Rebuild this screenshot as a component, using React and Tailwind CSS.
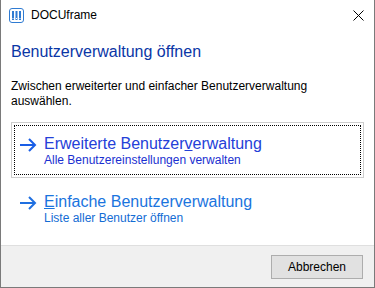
import React from "react";

function AppIcon() {
  return (
    <svg width="15" height="15" viewBox="0 0 15 15">
      <rect x="0.5" y="0.5" width="14" height="14" rx="2.5" fill="none" stroke="#2f7bd2" strokeWidth="1" />
      <rect x="3" y="3" width="2" height="9" fill="#2f7bd2" />
      <rect x="6.5" y="3" width="2" height="9" fill="#2f7bd2" />
      <rect x="10" y="3" width="2" height="9" fill="#2f7bd2" />
      <rect x="3.5" y="10" width="1" height="1" fill="#fff" />
      <rect x="7" y="10" width="1" height="1" fill="#fff" />
      <rect x="10.5" y="10" width="1" height="1" fill="#fff" />
    </svg>
  );
}

function Arrow({ color }) {
  return (
    <svg width="18" height="14" viewBox="0 0 18 14">
      <path d="M1 7 H16 M10 1 L16 7 L10 13" fill="none" stroke={color} strokeWidth="2" />
    </svg>
  );
}

function CommandLink({ title, sub, focused, titleColor, subColor, arrowColor }) {
  return (
    <div
      className={
        "h-[56px] p-[2px] border " +
        (focused ? "border-[#cdcdcd]" : "border-transparent")
      }
    >
      <div
        className={
          "h-full flex border " +
          (focused ? "border-dotted border-black" : "border-transparent")
        }
      >
        <div className="pl-[4px] pt-[12px] w-[29px]">
          <Arrow color={arrowColor} />
        </div>
        <div className="flex flex-col pt-[8px]">
          <span className="text-[16px] leading-[19px]" style={{ color: titleColor }}>
            {title}
          </span>
          <span className="text-[12px] leading-[15px]" style={{ color: subColor }}>
            {sub}
          </span>
        </div>
      </div>
    </div>
  );
}

export default function App() {
  return (
    <div
      className="w-[375px] h-[288px] bg-white border-l border-r border-b border-[#7a7a7a] flex flex-col overflow-hidden"
      style={{ fontFamily: '"Segoe UI", "Liberation Sans", Arial, sans-serif' }}
    >
      <div className="h-[30px] flex items-center pl-[8px] pr-[10px] shrink-0">
        <AppIcon />
        <span className="ml-[7px] text-[12px] text-black">DOCUframe</span>
        <div className="ml-auto">
          <svg width="11" height="11" viewBox="0 0 11 11">
            <path d="M0.5 0.5 L10.5 10.5 M10.5 0.5 L0.5 10.5" stroke="#000" strokeWidth="1" />
          </svg>
        </div>
      </div>
      <div className="flex-1 px-[10px] pt-[12px]">
        <div className="text-[16px] leading-[20px] text-[#0a36a6]">Benutzerverwaltung öffnen</div>
        <div className="mt-[17px] text-[12px] leading-[15px] text-black">
          Zwischen erweiterter und einfacher Benutzerverwaltung
          <br />
          auswählen.
        </div>
        <div className="mt-[13px] w-[353px] flex flex-col gap-[2px]">
          <CommandLink
            focused
            title={<>Erweiterte Benutzer<u>v</u>erwaltung</>}
            sub="Alle Benutzereinstellungen verwalten"
            titleColor="#2440d8"
            subColor="#1a2fd0"
            arrowColor="#1a5ee6"
          />
          <CommandLink
            title={<><u>E</u>infache Benutzerverwaltung</>}
            sub="Liste aller Benutzer öffnen"
            titleColor="#1a74de"
            subColor="#136cd4"
            arrowColor="#1f6fe0"
          />
        </div>
      </div>
      <div className="h-[42px] shrink-0 bg-[#f0f0f0] border-t border-[#dfdfdf] flex items-center justify-end pr-[11px]">
        <button className="w-[92px] h-[24px] bg-[#e1e1e1] border border-[#adadad] text-[12px] text-black">
          Abbrechen
        </button>
      </div>
    </div>
  );
}
